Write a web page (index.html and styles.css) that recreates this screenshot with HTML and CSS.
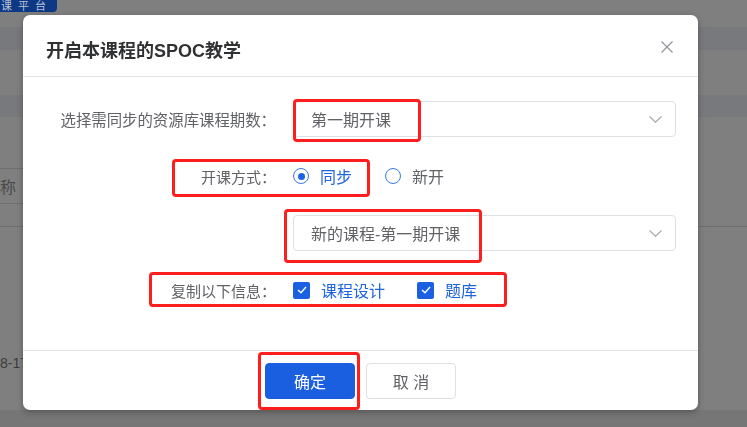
FILE: index.html
```html
<!DOCTYPE html>
<html lang="zh-CN">
<head>
    <meta charset="UTF-8">
    <meta name="viewport" content="width=device-width, initial-scale=1.0">
    <title>开启本课程的SPOC教学</title>

    <link rel="stylesheet" href="styles.css">

</head>
<body>

<div class="page">
    <div class="topbar"><span class="brand"><span class="brand_text">课平台</span></span></div>
    <div class="band band_a"></div>
    <div class="band_gap"></div>
    <div class="band band_b"></div>
    <div class="table_head"><span>称</span></div>
    <div class="table_row"></div>
    <div class="table_cell"><span>8-17</span></div>
    <div class="page_foot"></div>
</div>

<!-- dialog over a dark mask -->
<div class="mask">
    <div class="dialog">

        <div class="dialog_header">
            <span class="dialog_title">开启本课程的SPOC教学</span>
            <span class="dialog_close">
                <svg width="12" height="12" viewBox="0 0 12 12"><path d="M0.5 0.5 L11.5 11.5 M11.5 0.5 L0.5 11.5" stroke="#909399" stroke-width="1.2" fill="none"/></svg>
            </span>
        </div>

        <div class="dialog_body">
            <div class="form_row">
                <label class="form_label label_long">选择需同步的资源库课程期数：</label>
                <div class="select">
                    <span>第一期开课</span>
                    <svg width="13" height="7" viewBox="0 0 13 7"><path d="M0.5 0.5 L6.5 6.3 L12.5 0.5" stroke="#a8abb2" stroke-width="1.2" fill="none"/></svg>
                </div>
            </div>

            <div class="form_row">
                <label class="form_label">开课方式：</label>
                <div class="choices">
                    <span class="radio checked"><span class="radio_dot"></span><span class="choice_text">同步</span></span>
                    <span class="radio"><span class="radio_dot"></span><span class="choice_text">新开</span></span>
                </div>
            </div>

            <div class="form_row">
                <label class="form_label"></label>
                <div class="select">
                    <span>新的课程-第一期开课</span>
                    <svg width="13" height="7" viewBox="0 0 13 7"><path d="M0.5 0.5 L6.5 6.3 L12.5 0.5" stroke="#a8abb2" stroke-width="1.2" fill="none"/></svg>
                </div>
            </div>

            <div class="form_row">
                <label class="form_label">复制以下信息：</label>
                <div class="choices">
                    <span class="check"><span class="check_box"><svg width="10" height="8" viewBox="0 0 10 8"><path d="M1 4 L4 6.8 L9 1" stroke="#fff" stroke-width="1.4" fill="none"/></svg></span><span class="choice_text">课程设计</span></span>
                    <span class="check"><span class="check_box"><svg width="10" height="8" viewBox="0 0 10 8"><path d="M1 4 L4 6.8 L9 1" stroke="#fff" stroke-width="1.4" fill="none"/></svg></span><span class="choice_text">题库</span></span>
                </div>
            </div>
        </div>

        <div class="dialog_footer">
            <button class="btn btn_primary">确定</button>
            <button class="btn">取 消</button>
        </div>

        <!-- red annotation boxes -->
        <div class="mark mark_period"></div>
        <div class="mark mark_mode"></div>
        <div class="mark mark_course"></div>
        <div class="mark mark_copy"></div>
        <div class="mark mark_ok"></div>

    </div>
</div>

</body>
</html>
```

FILE: styles.css
```css
* { box-sizing: border-box; }

body {
    margin: 0;
    width: 747px;
    height: 427px;
    overflow: hidden;
    background: #7f7f7f;
    font-family: "Liberation Sans", "Noto Sans CJK SC", sans-serif;
}

/* page behind the mask */
.page {
    display: flex;
    flex-direction: column;
    height: 427px;
}
.topbar { height: 27px; }
.brand {
    display: block;
    width: 57px;
    height: 12px;
    overflow: hidden;
    background: #0c3884;
    border-bottom-right-radius: 4px;
}
.brand_text {
    display: block;
    padding-left: 1px;
    font-size: 11px;
    line-height: 12px;
    letter-spacing: 6px;
    color: #b9c3d6;
    white-space: nowrap;
}
.band { background: #77797c; }
.band_a { height: 23px; }
.band_gap { height: 45px; }
.band_b { height: 22px; }

.table_head {
    margin-top: 51px;
    width: 320px;
    height: 36px;
    border-top: 1px solid #6f6f6f;
    border-bottom: 1px solid #6f6f6f;
    display: flex;
    align-items: center;
    font-size: 16px;
    color: #4b4b4b;
}
.table_row {
    height: 23px;
    border-bottom: 1px solid #6f6f6f;
}
.table_cell {
    height: 183px;
    padding-top: 128px;
    font-size: 14px;
    color: #3c3c3c;
}
.page_foot {
    flex: 1;
    background: #767676;
}

/* mask + dialog */
.mask {
    position: fixed;
    top: 0;
    left: 0;
    right: 0;
    bottom: 0;
    padding: 15px 0 0 23px;
}
.dialog {
    position: relative;
    width: 675px;
    height: 395px;
    background: #fff;
    border-radius: 7px;
    box-shadow: 0 2px 6px rgba(0, 0, 0, 0.3);
    display: flex;
    flex-direction: column;
}

.dialog_header {
    height: 62px;
    border-bottom: 1px solid #e3e4e6;
    display: flex;
    align-items: center;
    justify-content: space-between;
    padding: 6px 25px 0 23px;
}
.dialog_title {
    font-size: 18px;
    font-weight: bold;
    color: #303133;
}
.dialog_close {
    display: flex;
    margin-top: -3px;
}

.dialog_body {
    display: flex;
    flex-direction: column;
    gap: 21px;
    padding: 24px 22px 42px 0;
    border-bottom: 1px solid #e3e4e6;
}
.form_row {
    display: flex;
    align-items: center;
    height: 36px;
}
.form_label {
    width: 253px;
    flex-shrink: 0;
    text-align: right;
    font-size: 15px;
    color: #606266;
}
.label_long { font-size: 15.4px; }
.select {
    margin-left: 17px;
    flex: 1;
    height: 36px;
    border: 1px solid #dcdfe6;
    border-radius: 4px;
    display: flex;
    align-items: center;
    justify-content: space-between;
    padding: 0 13px 0 17px;
    font-size: 16px;
    color: #606266;
}

.choices {
    margin-left: 17px;
    display: flex;
    align-items: center;
    gap: 33px;
    font-size: 16px;
}
.radio, .check {
    display: flex;
    align-items: center;
    color: #606266;
}
.radio_dot {
    width: 16px;
    height: 16px;
    border: 1px solid #3b78e3;
    border-radius: 50%;
    display: flex;
    align-items: center;
    justify-content: center;
}
.radio.checked .radio_dot:after {
    content: "";
    width: 7px;
    height: 7px;
    border-radius: 50%;
    background: #1e63e0;
}
.radio.checked .choice_text, .check .choice_text { color: #1e63e0; }
.choice_text { margin-left: 11px; }
.check + .check { margin-left: -1px; }

.check_box {
    width: 17px;
    height: 17px;
    border-radius: 2px;
    background: #1a60e0;
    display: flex;
    align-items: center;
    justify-content: center;
}

.dialog_footer {
    display: flex;
    justify-content: center;
    gap: 11px;
    padding-top: 12px;
}
.btn {
    width: 90px;
    height: 36px;
    border: 1px solid #dcdfe6;
    border-radius: 4px;
    background: #fff;
    font-family: "Liberation Sans", "Noto Sans CJK SC", sans-serif;
    font-size: 16px;
    color: #606266;
}
.btn_primary {
    background: #1a5fe0;
    border-color: #1a5fe0;
    color: #fff;
}

/* red boxes drawn over the dialog */
.mark {
    position: absolute;
    border: 3px solid #ff1e1e;
    border-radius: 4px;
}
.mark_period { left: 270px; top: 84px; width: 128px; height: 43px; }
.mark_mode { left: 149px; top: 144px; width: 198px; height: 38px; }
.mark_course { left: 261px; top: 194px; width: 198px; height: 54px; }
.mark_copy { left: 126px; top: 257px; width: 358px; height: 35px; }
.mark_ok { left: 235px; top: 337px; width: 102px; height: 58px; }
```
